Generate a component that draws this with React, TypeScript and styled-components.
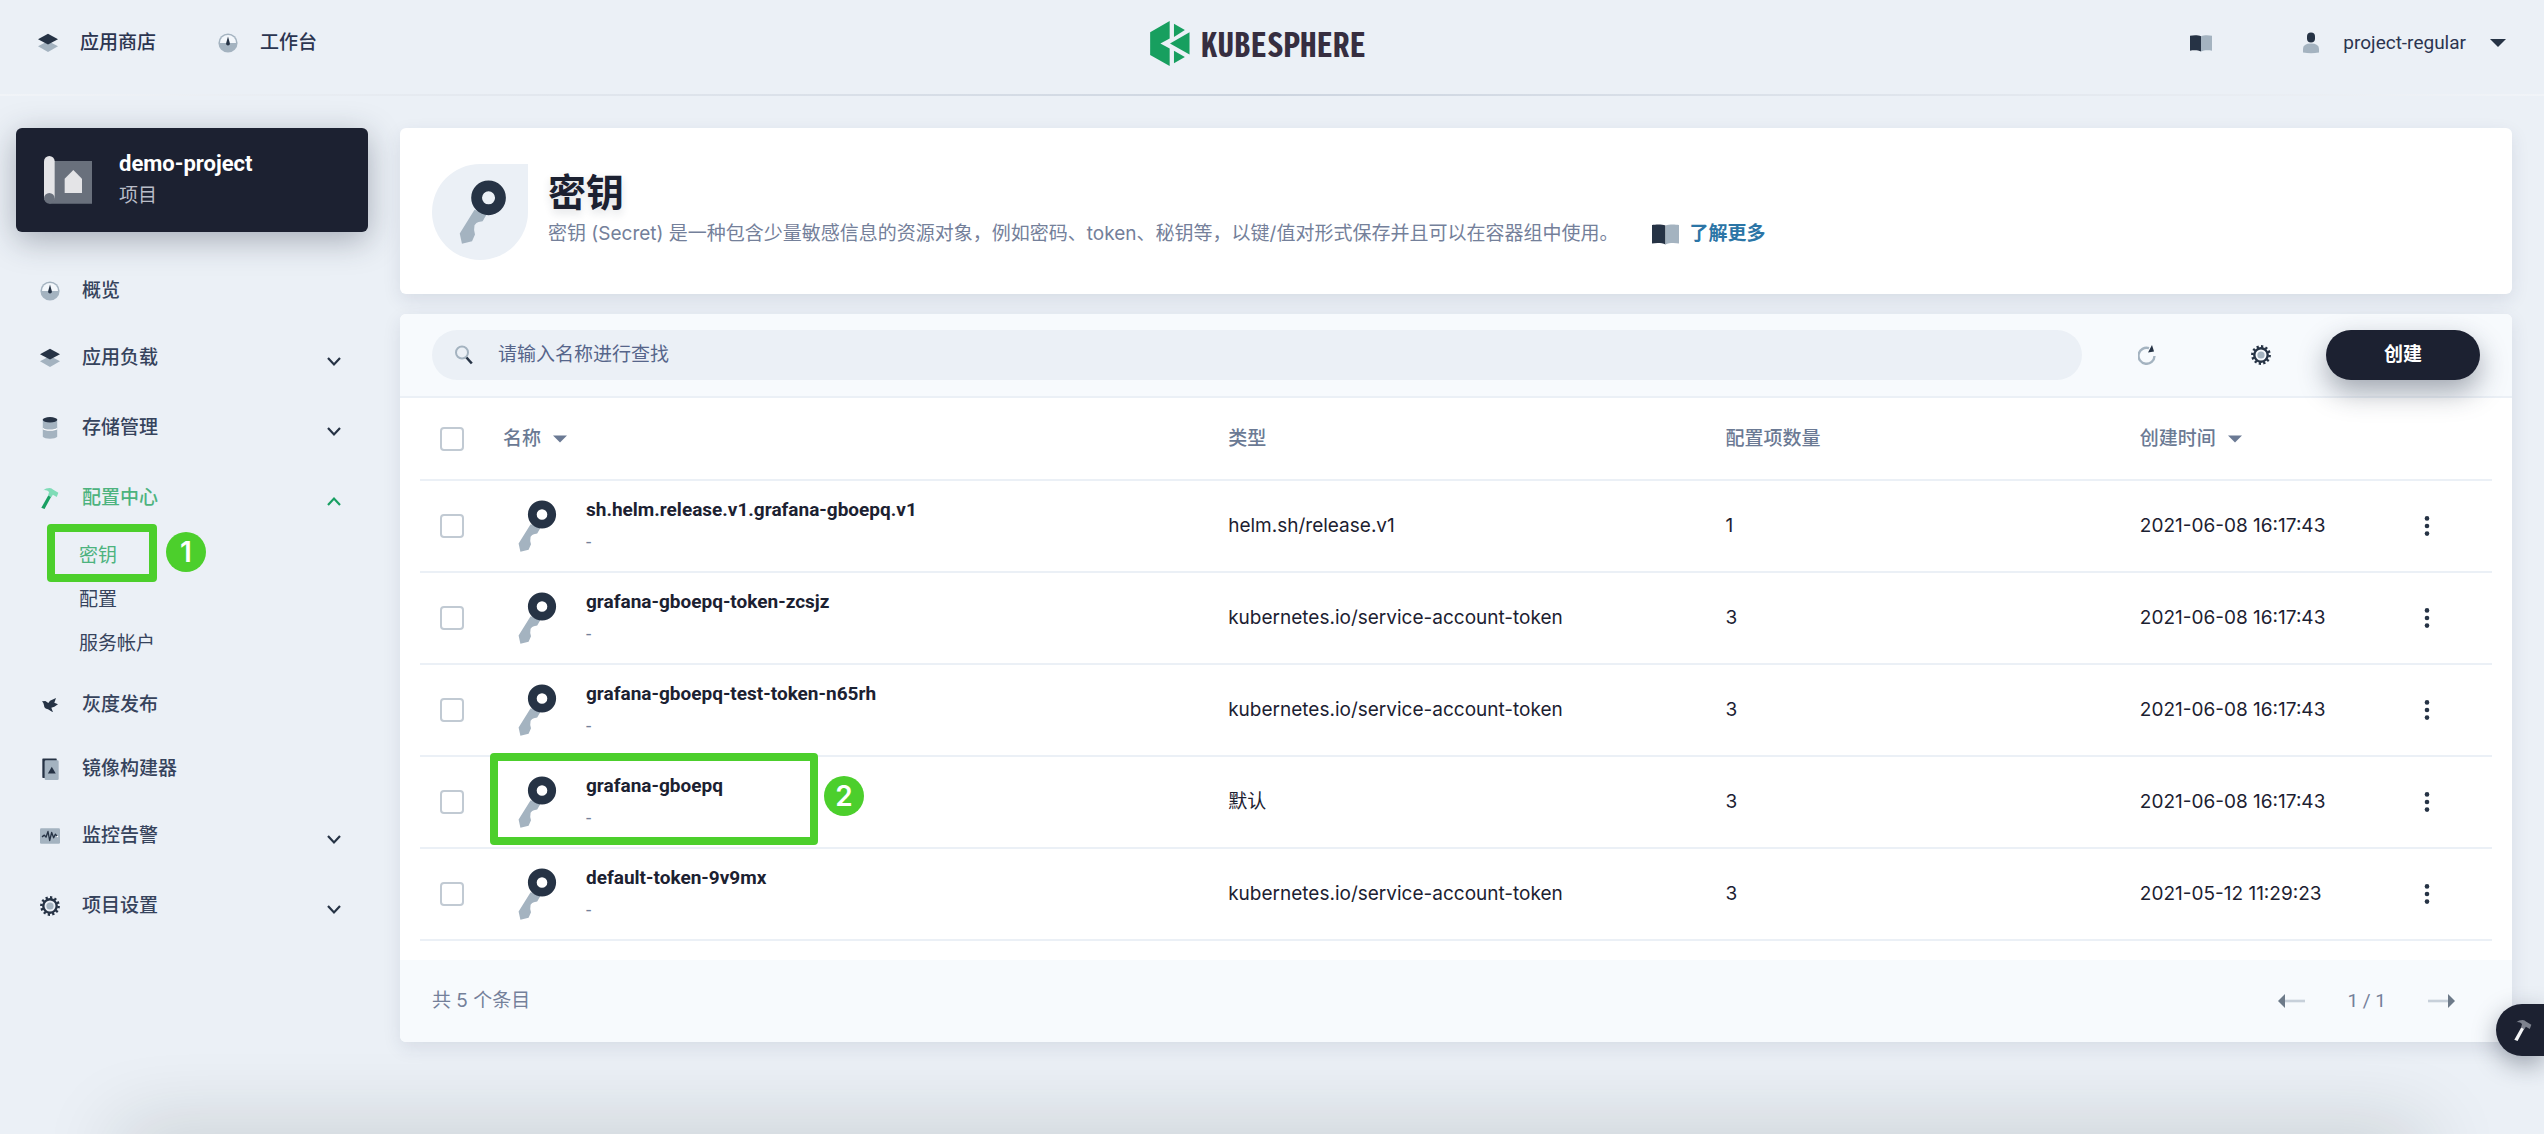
import React from 'react';
import styled, { createGlobalStyle, css } from 'styled-components';

const sans = `Roboto, "Noto Sans CJK SC", sans-serif`;
const cellFont = `Inter, "Noto Sans CJK SC", sans-serif`;

const color = {
  page: '#ebf0f6',
  ink: '#1c2131',
  iconDark: '#263345',
  iconLight: '#a4b3c0',
  nav: '#36435c',
  muted: '#74809a',
  head: '#6b7a94',
  line: '#ebf0f6',
  soft: '#f7fafd',
  green: '#4db37e',
  mark: '#4ccf2c',
};

const GlobalStyle = createGlobalStyle`
  * { box-sizing: border-box; }
  body {
    margin: 0;
    background: ${color.page};
    color: ${color.ink};
    font-family: ${sans};
    font-size: 19px;
    line-height: 28px;
  }
  button, input { font: inherit; color: inherit; }
  button { padding: 0; border: 0; background: none; cursor: pointer; }
  a { color: inherit; text-decoration: none; }
  ul { margin: 0; padding: 0; list-style: none; }
  svg { display: block; flex: none; }
`;

const Page = styled.div`
  position: relative;
  min-height: 100vh;
  overflow: hidden;

  &::after {
    content: '';
    position: absolute;
    left: 120px;
    right: 120px;
    bottom: -40px;
    height: 40px;
    box-shadow: 0 0 80px rgba(20, 34, 30, 0.24);
    pointer-events: none;
  }
`;

const Header = styled.header`
  display: grid;
  grid-template-columns: 1fr auto 1fr;
  align-items: center;
  height: 96px;
  padding: 0 38px 8px;
  border-bottom: 2px solid;
  border-image: linear-gradient(to right, #f1f4f8, #cdd5e0 50%, #f1f4f8) 1;
`;

const TopNav = styled.nav`
  display: flex;
  gap: 62px;
`;

const TopLink = styled.a`
  display: flex;
  align-items: center;
  gap: 22px;
  color: #2b3550;
  font-weight: 500;
`;

const Logo = styled.a`
  display: flex;
  align-items: center;
  gap: 11px;
  margin-right: 28px;
`;

const LogoText = styled.span`
  color: #362e40;
  font-family: "Noto Sans Mono CJK SC", "Noto Sans CJK SC", sans-serif;
  font-size: 33px;
  font-weight: 700;
  line-height: 45px;
`;

const TopTools = styled.div`
  display: flex;
  justify-content: flex-end;
  align-items: center;
  gap: 91px;
`;

const UserButton = styled.button`
  display: flex;
  align-items: center;
  gap: 24px;
  color: #2b3550;
`;

const Layout = styled.div`
  display: grid;
  grid-template-columns: 352px minmax(0, 1fr);
  gap: 32px;
  padding: 32px 32px 92px 16px;
`;

const ProjectCard = styled.button`
  display: flex;
  align-items: center;
  gap: 27px;
  width: 100%;
  height: 104px;
  padding: 0 28px;
  border-radius: 6px;
  background: ${color.ink};
  box-shadow: 0 8px 32px rgba(36, 46, 66, 0.35);
  text-align: left;
`;

const ProjectName = styled.strong`
  display: block;
  color: #fff;
  font-size: 22px;
  font-weight: 700;
  line-height: 32px;
`;

const ProjectKind = styled.span`
  display: block;
  color: #b9bdc8;
  line-height: 32px;
`;

const SideNav = styled.ul`
  padding-top: 27px;
`;

const navRow = css<{ $active?: boolean }>`
  display: flex;
  align-items: center;
  width: 100%;
  padding: 0 27px 0 24px;
  color: ${p => (p.$active ? color.green : color.nav)};
  font-weight: 500;
  text-align: left;
`;

const NavLink = styled.a<{ $active?: boolean }>`
  ${navRow}
  height: 64px;
`;

const NavGroup = styled.button<{ $active?: boolean }>`
  ${navRow}
  height: 70px;
`;

const NavIcon = styled.span`
  display: flex;
  justify-content: center;
  width: 20px;
  margin-right: 22px;
`;

const NavLabel = styled.span`
  flex: 1;
`;

const SubNav = styled.ul`
  margin: 1px 0 7px;
  padding-left: 63px;
`;

const SubItem = styled.li`
  position: relative;
`;

const SubLink = styled.a<{ $active?: boolean }>`
  display: block;
  color: ${p => (p.$active ? color.green : color.nav)};
  line-height: 44px;
`;

const MarkBox = styled.span<{ $top: number; $left: number; $width: number; $height: number }>`
  position: absolute;
  top: ${p => p.$top}px;
  left: ${p => p.$left}px;
  width: ${p => p.$width}px;
  height: ${p => p.$height}px;
  border: 8px solid ${color.mark};
  border-radius: 4px;
  pointer-events: none;
`;

const MarkDot = styled.span<{ $top: number; $left: number }>`
  position: absolute;
  top: ${p => p.$top}px;
  left: ${p => p.$left}px;
  width: 40px;
  height: 40px;
  border-radius: 50%;
  background: ${color.mark};
  color: #fff;
  font: 600 28px/40px Inter, sans-serif;
  text-align: center;
`;

const Main = styled.main`
  display: flex;
  flex-direction: column;
  gap: 20px;
`;

const Panel = styled.section`
  border-radius: 6px;
  background: #fff;
  box-shadow: 0 6px 18px rgba(36, 46, 90, 0.1);
`;

const Banner = styled(Panel)`
  display: flex;
  gap: 20px;
  padding: 36px 32px 34px;
`;

const BannerIcon = styled.span`
  display: flex;
  align-items: center;
  justify-content: center;
  width: 96px;
  height: 96px;
  padding-left: 5px;
  border-radius: 50% 0 50% 50%;
  background: ${color.line};
`;

const BannerTitle = styled.h1`
  margin: 0;
  padding-top: 5px;
  font-size: 38px;
  font-weight: 700;
  line-height: 48px;
  text-shadow: 0 4px 8px rgba(36, 46, 66, 0.15);
`;

const BannerText = styled.p`
  display: flex;
  align-items: center;
  margin: 0;
  padding-top: 3px;
  color: ${color.muted};
  font-family: ${cellFont};
`;

const MoreLink = styled.a`
  display: flex;
  align-items: center;
  gap: 10px;
  margin-left: 34px;
  color: #2b75a6;
  font-weight: 700;
`;

const Toolbar = styled.div`
  display: flex;
  align-items: center;
  height: 84px;
  padding: 0 32px;
  border-bottom: 2px solid ${color.line};
  border-radius: 6px 6px 0 0;
  background: ${color.soft};
`;

const Search = styled.label`
  display: flex;
  flex: 1;
  align-items: center;
  gap: 23px;
  height: 50px;
  padding: 0 23px;
  border-radius: 25px;
  background: ${color.line};
`;

const SearchInput = styled.input`
  flex: 1;
  border: 0;
  outline: 0;
  background: none;

  &::placeholder { color: #56658a; opacity: 1; }
`;

const ToolButton = styled.button`
  display: flex;
  align-items: center;
  justify-content: center;
  width: 114px;
  height: 50px;
`;

const ToolGroup = styled.div`
  display: flex;
  margin: 0 8px;
`;

const CreateButton = styled.button`
  width: 154px;
  height: 50px;
  border-radius: 25px;
  background: ${color.ink};
  box-shadow: 0 12px 28px rgba(36, 46, 66, 0.4);
  color: #fff;
  font-weight: 700;
`;

const TableWrap = styled.div`
  padding: 0 20px 19px;
`;

const Table = styled.table`
  width: 100%;
  border-collapse: separate;
  border-spacing: 0;
  table-layout: fixed;
`;

const Col = styled.col<{ $width?: string }>`
  width: ${p => p.$width ?? 'auto'};
`;

const Th = styled.th`
  height: 83px;
  padding: 0;
  border-bottom: 2px solid ${color.line};
  color: ${color.head};
  font-weight: 500;
  text-align: left;
`;

const Td = styled.td`
  position: relative;
  height: 92px;
  padding: 0;
  border-bottom: 2px solid ${color.line};
  font-family: ${cellFont};
  font-size: 19px;
`;

const SortButton = styled.button`
  display: flex;
  align-items: center;
  gap: 12px;
  font-weight: 500;
`;

const CheckBox = styled.input`
  display: block;
  appearance: none;
  width: 24px;
  height: 24px;
  margin: 0 0 0 20px;
  border: 2px solid #c1cad3;
  border-radius: 4px;
  background: #fff;
`;

const NameCell = styled.div`
  display: flex;
  align-items: center;
  gap: 29px;
  padding-left: 15px;
  font-family: ${sans};
`;

const Name = styled.a`
  display: block;
  font-weight: 700;
  line-height: 32px;
`;

const Note = styled.span`
  display: block;
  color: ${color.muted};
  line-height: 32px;
`;

const MoreButton = styled.button`
  display: flex;
  justify-content: center;
  width: 100%;
`;

const Footer = styled.footer`
  display: flex;
  align-items: center;
  justify-content: space-between;
  height: 82px;
  padding: 0 57px 0 32px;
  border-radius: 0 0 6px 6px;
  background: ${color.soft};
  color: ${color.muted};
  font-family: ${cellFont};
`;

const Pager = styled.div`
  display: flex;
  align-items: center;
  gap: 42px;
  font-family: ${sans};
`;

const ToolboxButton = styled.button`
  position: fixed;
  right: 0;
  bottom: 78px;
  display: flex;
  align-items: center;
  width: 48px;
  height: 52px;
  padding-left: 18px;
  border-radius: 26px 0 0 26px;
  background: ${color.ink};
  box-shadow: 0 8px 24px rgba(36, 46, 66, 0.4);
`;

const D = color.iconDark;
const L = color.iconLight;

const Layers = () => (
  <svg width="20" height="20" viewBox="0 0 20 20">
    <path d="M0 13.2 10 8l10 5.2L10 19z" fill={L} />
    <path d="M0 6.2 10 .8l10 5.4-10 5.4z" fill={D} />
  </svg>
);

const Dashboard = () => (
  <svg width="20" height="20" viewBox="0 0 20 20">
    <circle cx="10" cy="10" r="9.6" fill={L} />
    <path d="M2 10a8 8 0 0 1 16 0z" fill="#f3f7fb" />
    <path d="M10 3.5 11.8 10a1.9 1.9 0 1 1-3.6 0z" fill={D} />
  </svg>
);

const Storage = () => (
  <svg width="16" height="22" viewBox="0 0 16 22">
    <path d="M.8 2.8h14.4v17C13.5 22.3 2.5 22.3.8 19.8z" fill={L} />
    <ellipse cx="8" cy="2.8" rx="7.3" ry="2.7" fill={D} />
    <path d="M.8 11.5c2.5 2.2 12 2.2 14.4 0" fill="none" stroke="#fff" strokeWidth="1.2" />
  </svg>
);

const Hammer = ({ head = '#7fdcb7', handle = '#189f62' }: { head?: string; handle?: string }) => (
  <svg width="18" height="23" viewBox="124 503 56 68">
    <path d="M147 527l9 4-21 39-10-4z" fill={handle} />
    <path d="M131 511q8-7 20-7 7 0 10 5l17 10-5 13-12-7-5 8-10-5 3-11q-5-7-18-6z" fill={head} />
  </svg>
);

const Bird = () => (
  <svg width="16" height="14" viewBox="127 140 48 42">
    <path d="M127 150l10-1 9 6 5-7 18-8-5 14 11 5-11 7-9 3 5 14-15-9q-12-2-12-12 0-6-6-12z" fill={D} />
  </svg>
);

const ImageBuilder = () => (
  <svg width="17" height="22" viewBox="123 323 52 67">
    <rect x="124" y="324" width="44" height="60" rx="2" fill={D} />
    <rect x="131" y="330" width="43" height="60" rx="4" fill={L} />
    <path d="M153 350l12 20h-24z" fill={D} />
  </svg>
);

const Monitor = () => (
  <svg width="20" height="16" viewBox="0 0 60 47">
    <rect width="60" height="47" rx="4" fill={L} />
    <path d="M6 26l7-5 5 6 6-17 5 27 6-24 6 16 5-11 5 6" fill="none" stroke={D} strokeWidth="4" strokeLinejoin="round" />
    <circle cx="52" cy="25" r="2.5" fill="#fff" />
  </svg>
);

const Gear = () => (
  <svg width="20" height="20" viewBox="0 0 20 20">
    <circle cx="10" cy="10" r="8.6" fill="none" stroke={D} strokeWidth="2.6" pathLength={24} strokeDasharray="1 1" />
    <circle cx="10" cy="10" r="6.7" fill="none" stroke={D} strokeWidth="2.4" />
    <circle cx="10" cy="10" r="3.6" fill={L} />
  </svg>
);

const Book = ({ width = 22 }: { width?: number }) => (
  <svg width={width} height={Math.round(width * 0.78)} viewBox="0 0 22 17">
    <path d="M11 1.2C8 0 3 .2 0 .8v15c3-.6 8-.8 11 .8z" fill={D} />
    <path d="M11 1.2C14 0 19 .2 22 .8v15c-3-.6-8-.8-11 .8z" fill={L} />
  </svg>
);

const User = () => (
  <svg width="16" height="22" viewBox="0 0 16 22">
    <rect x="4" y=".5" width="8" height="10" rx="4" fill={D} />
    <path d="M0 17q0-5.5 8-5.5t8 5.5v3.5q-8 1.5-16 0z" fill={L} />
  </svg>
);

const Caret = ({ fill = color.head, width = 14 }: { fill?: string; width?: number }) => (
  <svg width={width} height="8" viewBox="0 0 16 8">
    <path d="M0 0h16L8 8z" fill={fill} />
  </svg>
);

const Chevron = ({ open }: { open?: boolean }) => (
  <svg width="14" height="18" viewBox="0 0 14 18">
    <path
      d={open ? 'M1 16l6-6.5 6 6.5' : 'M1 9l6 6.5L13 9'}
      fill="none"
      stroke={open ? '#189f62' : D}
      strokeWidth="2.2"
    />
  </svg>
);

const KeyIcon = ({ width = 39 }: { width?: number }) => (
  <svg width={width} height={Math.round((width * 52) / 39)} viewBox="-24 -14.5 39 52">
    <path
      d="M-11.4 9.7-23.4 29l1.8 8.2 8.2-1.9 2.4-5.6q-1.3-3-.4-7.4 1.5-2.4 3.3-2.6l3.3-.6 3.2-5.5z"
      fill={L}
    />
    <circle r="9.7" fill="none" stroke={D} strokeWidth="8.8" />
  </svg>
);

const SearchIcon = () => (
  <svg width="18" height="20" viewBox="0 0 18 20">
    <circle cx="7" cy="7.5" r="6" fill="none" stroke={L} strokeWidth="2" />
    <path d="M11.5 12.5l5.3 6" stroke={D} strokeWidth="2.6" />
  </svg>
);

const Refresh = () => (
  <svg width="18" height="20" viewBox="0 0 18 20">
    <path d="M11 3.2A8 8 0 1 0 16.5 11" fill="none" stroke={L} strokeWidth="2.4" />
    <path d="M14 0l2 6.5-6 1z" fill={D} />
  </svg>
);

const Dots = () => (
  <svg width="6" height="20" viewBox="0 0 6 20">
    <circle cx="3" cy="2.4" r="2.3" fill={D} />
    <circle cx="3" cy="10" r="2.3" fill={D} />
    <circle cx="3" cy="17.6" r="2.3" fill={D} />
  </svg>
);

const Arrow = ({ right }: { right?: boolean }) => (
  <svg width="27" height="14" viewBox="0 0 27 14">
    <path d={right ? 'M0 7h20' : 'M7 7h20'} stroke="#c7d0da" strokeWidth="2.6" />
    <path d={right ? 'M27 7l-7-7v14z' : 'M0 7l7-7v14z'} fill="#6d7a89" />
  </svg>
);

const ProjectIcon = () => (
  <svg width="48" height="48" viewBox="132 468 144 144">
    <path d="M148 483h128v128H148z" fill="#69707c" />
    <rect x="132" y="468" width="32" height="140" rx="16" fill="#e4e4e7" />
    <circle cx="148" cy="595" r="16" fill="#69707c" />
    <path d="M220 510l26 26v43h-52v-43z" fill="#e4e4e7" />
  </svg>
);

const LogoMark = () => (
  <svg width="40" height="45" viewBox="90 59 120 136">
    <g fill="#179f5f">
      <path d="M90 93l59-34v53l-28 15 28 15v53l-59-33z" />
      <path d="M162 67l33 19-33 21zM209 93v67l-59-33zM162 149l33 19-33 19z" />
    </g>
  </svg>
);

type NavEntry = {
  label: string;
  icon: React.ReactNode;
  group?: boolean;
  children?: string[];
};

const navEntries: NavEntry[] = [
  { label: '概览', icon: <Dashboard /> },
  { label: '应用负载', icon: <Layers />, group: true },
  { label: '存储管理', icon: <Storage />, group: true },
  { label: '配置中心', icon: <Hammer />, group: true, children: ['密钥', '配置', '服务帐户'] },
  { label: '灰度发布', icon: <Bird /> },
  { label: '镜像构建器', icon: <ImageBuilder /> },
  { label: '监控告警', icon: <Monitor />, group: true },
  { label: '项目设置', icon: <Gear />, group: true },
];

const secrets = [
  { name: 'sh.helm.release.v1.grafana-gboepq.v1', type: 'helm.sh/release.v1', count: 1, created: '2021-06-08 16:17:43' },
  { name: 'grafana-gboepq-token-zcsjz', type: 'kubernetes.io/service-account-token', count: 3, created: '2021-06-08 16:17:43' },
  { name: 'grafana-gboepq-test-token-n65rh', type: 'kubernetes.io/service-account-token', count: 3, created: '2021-06-08 16:17:43' },
  { name: 'grafana-gboepq', type: '默认', count: 3, created: '2021-06-08 16:17:43', marked: true },
  { name: 'default-token-9v9mx', type: 'kubernetes.io/service-account-token', count: 3, created: '2021-05-12 11:29:23' },
];

const Sidebar = () => (
  <aside>
    <ProjectCard>
      <ProjectIcon />
      <span>
        <ProjectName>demo-project</ProjectName>
        <ProjectKind>项目</ProjectKind>
      </span>
    </ProjectCard>
    <SideNav>
      {navEntries.map(entry => {
        const open = Boolean(entry.children);
        return (
          <li key={entry.label}>
            {entry.group ? (
              <NavGroup $active={open} aria-expanded={open}>
                <NavIcon>{entry.icon}</NavIcon>
                <NavLabel>{entry.label}</NavLabel>
                <Chevron open={open} />
              </NavGroup>
            ) : (
              <NavLink href="#">
                <NavIcon>{entry.icon}</NavIcon>
                <NavLabel>{entry.label}</NavLabel>
              </NavLink>
            )}
            {entry.children && (
              <SubNav>
                {entry.children.map((child, i) => (
                  <SubItem key={child}>
                    <SubLink href="#" $active={i === 0}>{child}</SubLink>
                    {i === 0 && (
                      <>
                        <MarkBox $top={-10} $left={-32} $width={110} $height={58} />
                        <MarkDot $top={-2} $left={87}>1</MarkDot>
                      </>
                    )}
                  </SubItem>
                ))}
              </SubNav>
            )}
          </li>
        );
      })}
    </SideNav>
  </aside>
);

const SecretTable = () => (
  <Table>
    <colgroup>
      <Col $width="83px" />
      <Col $width="35%" />
      <Col $width="24%" />
      <Col $width="20%" />
      <Col />
      <Col $width="130px" />
    </colgroup>
    <thead>
      <tr>
        <Th><CheckBox type="checkbox" aria-label="全选" /></Th>
        <Th><SortButton>名称<Caret /></SortButton></Th>
        <Th>类型</Th>
        <Th>配置项数量</Th>
        <Th><SortButton>创建时间<Caret /></SortButton></Th>
        <Th />
      </tr>
    </thead>
    <tbody>
      {secrets.map(secret => (
        <tr key={secret.name}>
          <Td><CheckBox type="checkbox" aria-label={secret.name} /></Td>
          <Td>
            <NameCell>
              <KeyIcon />
              <span>
                <Name href="#">{secret.name}</Name>
                <Note>-</Note>
              </span>
            </NameCell>
            {secret.marked && (
              <>
                <MarkBox $top={-4} $left={-13} $width={328} $height={92} />
                <MarkDot $top={19} $left={321}>2</MarkDot>
              </>
            )}
          </Td>
          <Td>{secret.type}</Td>
          <Td>{secret.count}</Td>
          <Td>{secret.created}</Td>
          <Td><MoreButton aria-label="更多操作"><Dots /></MoreButton></Td>
        </tr>
      ))}
    </tbody>
  </Table>
);

export default function App() {
  return (
    <Page>
      <GlobalStyle />
      <Header>
        <TopNav>
          <TopLink href="#"><Layers />应用商店</TopLink>
          <TopLink href="#"><Dashboard />工作台</TopLink>
        </TopNav>
        <Logo href="#">
          <LogoMark />
          <LogoText>KUBESPHERE</LogoText>
        </Logo>
        <TopTools>
          <button aria-label="文档"><Book /></button>
          <UserButton>
            <User />
            project-regular
            <Caret fill={D} width={16} />
          </UserButton>
        </TopTools>
      </Header>
      <Layout>
        <Sidebar />
        <Main>
          <Banner>
            <BannerIcon><KeyIcon width={48} /></BannerIcon>
            <div>
              <BannerTitle>密钥</BannerTitle>
              <BannerText>
                密钥 (Secret) 是一种包含少量敏感信息的资源对象，例如密码、token、秘钥等，以键/值对形式保存并且可以在容器组中使用。
                <MoreLink href="#"><Book width={27} />了解更多</MoreLink>
              </BannerText>
            </div>
          </Banner>
          <Panel>
            <Toolbar>
              <Search>
                <SearchIcon />
                <SearchInput type="text" placeholder="请输入名称进行查找" aria-label="请输入名称进行查找" />
              </Search>
              <ToolGroup>
                <ToolButton aria-label="刷新"><Refresh /></ToolButton>
                <ToolButton aria-label="设置"><Gear /></ToolButton>
              </ToolGroup>
              <CreateButton>创建</CreateButton>
            </Toolbar>
            <TableWrap>
              <SecretTable />
            </TableWrap>
            <Footer>
              <span>共 5 个条目</span>
              <Pager>
                <button aria-label="上一页"><Arrow /></button>
                <span>1 / 1</span>
                <button aria-label="下一页"><Arrow right /></button>
              </Pager>
            </Footer>
          </Panel>
        </Main>
      </Layout>
      <ToolboxButton aria-label="工具箱"><Hammer head="#7d828e" handle="#f4f5f7" /></ToolboxButton>
    </Page>
  );
}
